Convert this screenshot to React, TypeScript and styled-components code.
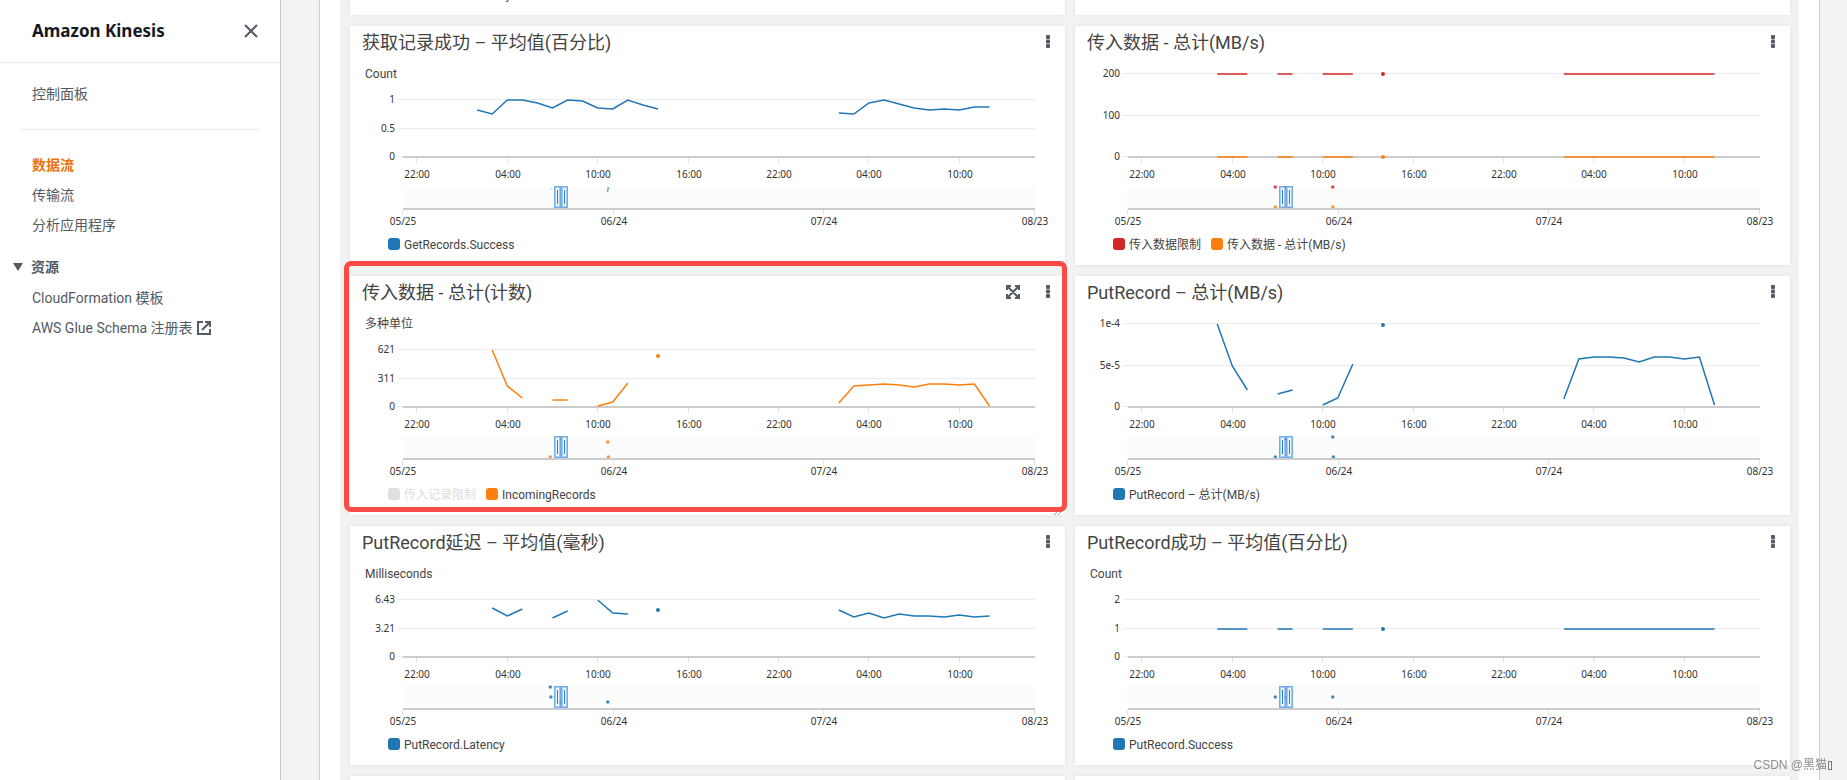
import React, { useLayoutEffect, useRef, useState } from "react";
import styled, { createGlobalStyle } from "styled-components";

const BLUE = "#1f77b4";
const ORANGE = "#ff7f0e";
const RED = "#d62728";
const INK = "#545b64";

const GlobalStyle = createGlobalStyle`
  * { box-sizing: border-box; }
  body {
    margin: 0;
    background: #f2f3f3;
    font-family: Roboto, "Noto Sans CJK SC", sans-serif;
    font-size: 14px;
    color: ${INK};
  }
  button {
    padding: 0;
    border: 0;
    background: none;
    color: inherit;
    font: inherit;
    cursor: pointer;
  }
`;

const Page = styled.div`
  display: flex;
  height: 100vh;
  overflow: hidden;
`;

/* ---------- side navigation ---------- */

const Sidebar = styled.aside`
  flex: 0 0 281px;
  background: #fff;
  border-right: 1px solid #c3c9c9;
`;

const SidebarHeader = styled.header`
  display: flex;
  align-items: center;
  justify-content: space-between;
  height: 63px;
  padding: 0 22px 0 32px;
  border-bottom: 1px solid #eaeded;
`;

const ServiceName = styled.h2`
  margin: 0;
  font-family: "Noto Sans", "Noto Sans CJK SC", sans-serif;
  font-size: 17px;
  line-height: 22px;
  font-weight: 700;
  color: #16191f;
`;

const IconButton = styled.button`
  display: flex;
  align-items: center;
  justify-content: center;
`;

const NavGroup = styled.ul`
  list-style: none;
  margin: 0 20px;
  padding: 16px 0 20px 12px;
  & + & {
    padding: 20px 0 12px 12px;
    border-top: 1px solid #eaeded;
  }
`;

const NavItem = styled.li`
  display: flex;
  align-items: center;
  height: 30px;
`;

const NavLink = styled.a<{ $active?: boolean }>`
  display: flex;
  align-items: center;
  gap: 4px;
  line-height: 20px;
  text-decoration: none;
  color: ${(p) => (p.$active ? "#ec7211" : INK)};
  font-weight: ${(p) => (p.$active ? 700 : 400)};
`;

const SectionToggle = styled.button`
  display: flex;
  align-items: center;
  gap: 8px;
  height: 30px;
  margin-left: 13px;
  font-weight: 700;
  line-height: 20px;
`;

const SectionList = styled.ul`
  list-style: none;
  margin: 0;
  padding: 1px 0 0 32px;
`;

/* ---------- dashboard ---------- */

const Main = styled.main`
  flex: 1;
  min-width: 0;
  padding: 0 27px 0 38px;
`;

const Container = styled.div`
  min-height: 100%;
  padding: 0 20px;
  background: #fff;
  border: solid #c8cfcf;
  border-width: 0 1px;
`;

const Dashboard = styled.div`
  display: grid;
  grid-template-columns: repeat(2, minmax(0, 1fr));
  gap: 11px 10px;
  padding: 0 9px 0 10px;
  background: #f1f3f3;
`;

const Card = styled.section`
  position: relative;
  min-width: 0;
  background: #fff;
  box-shadow: 0 0 4px rgba(0, 0, 0, 0.07);
`;

const CardTail = styled(Card)`
  display: flex;
  align-items: flex-end;
  height: 15px;
`;

const CardHead = styled(Card)`
  height: 239px;
`;

const CardHeader = styled.header`
  display: flex;
  align-items: center;
  gap: 22px;
  height: 34px;
  padding: 0 11px 0 12px;
`;

const CardTitle = styled.h3`
  flex: 1;
  margin: 0;
  font-size: 18px;
  line-height: 24px;
  font-weight: 400;
  color: #444;
`;

const CardAction = styled(IconButton)`
  padding-bottom: 2px;
`;

const ChartArea = styled.div`
  height: 172px;
`;

const ChartSvg = styled.svg`
  display: block;
  width: 100%;
  height: 172px;
  overflow: visible;
`;

const TickText = styled.text`
  font-family: "Noto Sans", "Noto Sans CJK SC", sans-serif;
  font-size: 10px;
  fill: #333;
`;

const UnitText = styled.text`
  font-size: 12px;
  fill: #444;
`;

const Legend = styled.ul`
  display: flex;
  gap: 10px;
  list-style: none;
  margin: 0;
  padding: 0 0 9px 38px;
`;

const LegendItem = styled.li<{ $muted?: boolean }>`
  display: flex;
  align-items: center;
  gap: 4px;
  height: 24px;
  font-size: 12px;
  line-height: 16px;
  color: ${(p) => (p.$muted ? "#ddd" : "#444")};
`;

const LegendLabel = styled.span`
  padding-top: 2px;
`;

const Swatch = styled.span<{ $color: string }>`
  width: 12px;
  height: 12px;
  border-radius: 3px;
  background: ${(p) => p.$color};
`;

const Highlight = styled.div`
  position: absolute;
  inset: -15px -2px 3px -6px;
  border: 5px solid #fa4b46;
  border-radius: 7px;
  pointer-events: none;
`;

const ResizeGrip = styled.svg`
  position: absolute;
  right: 3px;
  bottom: 0;
`;

const Watermark = styled.div`
  position: fixed;
  right: 15px;
  bottom: 6px;
  display: flex;
  align-items: center;
  font: 12px/18px "Liberation Sans", "Noto Sans CJK SC", sans-serif;
  color: #8c8c8c;
`;

const MissingGlyph = styled.span`
  width: 4px;
  height: 9px;
  margin-left: 1px;
  border: 1px solid #777;
`;

/* ---------- icons ---------- */

const CloseIcon = () => (
  <svg width="14" height="14" viewBox="0 0 14 14" aria-hidden="true">
    <path d="M1 1 13 13M13 1 1 13" stroke={INK} strokeWidth="2" fill="none" />
  </svg>
);

const CaretIcon = () => (
  <svg width="10" height="8" viewBox="0 0 10 8" aria-hidden="true">
    <path d="M0 0H10L5 8Z" fill={INK} />
  </svg>
);

const ExternalIcon = () => (
  <svg width="14" height="14" viewBox="0 0 14 14" aria-hidden="true">
    <path d="M6 1H1V13H13V8M8 1H13V6M13 1 5 9" stroke={INK} strokeWidth="2" fill="none" />
  </svg>
);

const MenuIcon = () => (
  <svg width="12" height="14" viewBox="0 0 12 14" aria-hidden="true">
    {[0, 4.5, 9].map((y) => (
      <rect key={y} x="4" y={y} width="4" height="4" rx="1" fill={INK} />
    ))}
  </svg>
);

const ExpandIcon = () => (
  <svg width="14" height="14" viewBox="0 0 14 14" aria-hidden="true">
    <path
      d="M5 1H1V5M9 1H13V5M5 13H1V9M9 13H13V9M1 1 13 13M13 1 1 13"
      stroke={INK}
      strokeWidth="2"
      fill="none"
    />
  </svg>
);

/* ---------- chart ---------- */

type Segment = { start: number; values: number[] };
type Series = { color: string; segments: Segment[] };
/* x is the share of the timeline, y the distance below the top of its band */
type Mark = { x: number; y: number; color: string; faint?: boolean; dash?: boolean };
type ChartProps = {
  unit?: string;
  ticks: [string, string, string];
  series: Series[];
  marks: Mark[];
};

const PLOT_LEFT = 53;
const PLOT_RIGHT = 30;
const BASE = 97;
const BAND_TOP = 126;
const BAND_HEIGHT = 22;
const HOURS = 41.94;
const FIRST_HOUR = 0.92;
const TIMES = ["22:00", "04:00", "10:00", "16:00", "22:00", "04:00", "10:00"];
const DATES = ["05/25", "06/24", "07/24", "08/23"];

function Brush({ x }: { x: number }) {
  return (
    <g>
      <rect x={x} y={BAND_TOP} width="14" height={BAND_HEIGHT} fill="#a5cbf0" />
      {[x, x + 7].map((hx) => (
        <g key={hx}>
          <rect x={hx + 0.5} y={BAND_TOP + 0.5} width="6" height="21" fill="none" stroke="#73ade8" />
          <rect x={hx + 2} y={BAND_TOP + 2} width="3" height="18" fill="#eef6fd" />
          <rect x={hx + 3} y={BAND_TOP + 4} width="1" height="14" fill="#2f7fd0" />
        </g>
      ))}
    </g>
  );
}

function Chart({ unit, ticks, series, marks }: ChartProps) {
  const ref = useRef<HTMLDivElement>(null);
  const [width, setWidth] = useState(715);

  useLayoutEffect(() => {
    const node = ref.current;
    if (!node) return;
    const measure = () => setWidth(node.clientWidth);
    measure();
    const observer = new ResizeObserver(measure);
    observer.observe(node);
    return () => observer.disconnect();
  }, []);

  const right = width - PLOT_RIGHT;
  const plot = right - PLOT_LEFT;
  const top = unit ? 40 : 14;
  const middle = unit ? 68 : 55;
  const xOf = (hour: number) => PLOT_LEFT + ((hour + FIRST_HOUR) / HOURS) * plot;
  const yOf = (value: number) => Math.round(BASE - value * (BASE - top));

  return (
    <ChartArea ref={ref}>
      <ChartSvg>
        {unit && (
          <UnitText x="15" y="18">
            {unit}
          </UnitText>
        )}
        {[top - 1, middle, BASE - 1].map((y, i) => (
          <g key={y}>
            <rect x={PLOT_LEFT - 5} y={y} width={plot + 5} height="1" fill="#ececec" />
            <TickText x={PLOT_LEFT - 8} y={y + 4} textAnchor="end">
              {ticks[i]}
            </TickText>
          </g>
        ))}
        <rect x={PLOT_LEFT} y={BASE - 1} width={plot} height="2" fill="#ccc" />
        {TIMES.map((label, i) => {
          const x = Math.floor(xOf(i * 6));
          return (
            <g key={i}>
              <rect x={x} y={BASE + 1} width="1" height="5" fill="#e4e4e4" />
              <TickText x={x + 1} y="118" textAnchor="middle">
                {label}
              </TickText>
            </g>
          );
        })}
        {series.map((s, si) =>
          s.segments.map((seg, i) =>
            seg.values.length === 1 ? (
              <circle key={`${si}-${i}`} cx={xOf(seg.start)} cy={yOf(seg.values[0])} r="2" fill={s.color} />
            ) : (
              <polyline
                key={`${si}-${i}`}
                points={seg.values.map((v, n) => `${xOf(seg.start + n)},${yOf(v)}`).join(" ")}
                fill="none"
                stroke={s.color}
                strokeWidth="1.5"
              />
            )
          )
        )}

        <rect x={PLOT_LEFT - 1} y={BAND_TOP} width={plot + 1} height={BAND_HEIGHT} fill="#fcfcfc" />
        <Brush x={Math.round(PLOT_LEFT + plot * 0.239)} />
        {marks.map((m, i) =>
          m.dash ? (
            <path
              key={i}
              d={`M${PLOT_LEFT + m.x * plot} ${BAND_TOP + m.y}l-1 5`}
              stroke={m.color}
              strokeWidth="1.5"
              opacity="0.6"
            />
          ) : (
            <circle
              key={i}
              cx={PLOT_LEFT + m.x * plot}
              cy={BAND_TOP + m.y}
              r={m.faint ? 1 : 1.75}
              fill={m.color}
              opacity={m.faint ? 0.5 : 0.85}
            />
          )
        )}
        <rect x={PLOT_LEFT} y={BAND_TOP + BAND_HEIGHT} width={plot} height="2" fill="#ccc" />
        {DATES.map((label, i) => {
          const x = Math.round(PLOT_LEFT - 1 + (plot * i) / 3);
          return (
            <g key={label}>
              <rect x={x} y="150" width="1" height="5" fill="#e4e4e4" />
              <TickText x={x + 1} y="165" textAnchor="middle">
                {label}
              </TickText>
            </g>
          );
        })}
      </ChartSvg>
    </ChartArea>
  );
}

/* ---------- data ---------- */

type LegendEntry = { label: string; color: string; muted?: boolean };
type Widget = ChartProps & { title: string; legend: LegendEntry[]; selected?: boolean };

const flat = (v: number): Segment[] => [
  { start: 5, values: [v, v, v] },
  { start: 9, values: [v, v] },
  { start: 12, values: [v, v, v] },
  { start: 16, values: [v] },
  { start: 28, values: Array(11).fill(v) },
];

const EARLY = 0.233;
const INSIDE = 0.249;
const LATE = 0.324;

const WIDGETS: Widget[] = [
  {
    title: "获取记录成功 – 平均值(百分比)",
    unit: "Count",
    ticks: ["1", "0.5", "0"],
    legend: [{ label: "GetRecords.Success", color: BLUE }],
    series: [
      {
        color: BLUE,
        segments: [
          { start: 4, values: [0.82, 0.755, 1, 1, 0.947, 0.86, 1, 0.982, 0.86, 0.842, 1, 0.918, 0.842] },
          { start: 28, values: [0.772, 0.755, 0.947, 1, 0.93, 0.86, 0.825, 0.842, 0.825, 0.877, 0.877] },
        ],
      },
    ],
    marks: [
      { x: EARLY + 0.002, y: 3, color: "#9cc3de", faint: true },
      { x: LATE + 0.001, y: 1, color: BLUE, dash: true },
    ],
  },
  {
    title: "传入数据 - 总计(MB/s)",
    ticks: ["200", "100", "0"],
    legend: [
      { label: "传入数据限制", color: RED },
      { label: "传入数据 - 总计(MB/s)", color: ORANGE },
    ],
    series: [
      { color: RED, segments: flat(1) },
      { color: ORANGE, segments: flat(0) },
    ],
    marks: [
      { x: EARLY, y: 1, color: RED },
      { x: INSIDE, y: 1, color: RED, faint: true },
      { x: LATE, y: 1, color: RED },
      { x: EARLY, y: 21, color: ORANGE },
      { x: INSIDE, y: 21, color: ORANGE, faint: true },
      { x: LATE, y: 21, color: ORANGE },
    ],
  },
  {
    title: "传入数据 - 总计(计数)",
    selected: true,
    unit: "多种单位",
    ticks: ["621", "311", "0"],
    legend: [
      { label: "传入记录限制", color: "#e0e0e0", muted: true },
      { label: "IncomingRecords", color: ORANGE },
    ],
    series: [
      {
        color: ORANGE,
        segments: [
          { start: 5, values: [1, 0.363, 0.152] },
          { start: 9, values: [0.123, 0.123] },
          { start: 12, values: [0.018, 0.088, 0.42] },
          { start: 16, values: [0.889] },
          { start: 28, values: [0.07, 0.368, 0.386, 0.404, 0.386, 0.351, 0.404, 0.404, 0.386, 0.404, 0.01] },
        ],
      },
    ],
    marks: [
      { x: EARLY, y: 21, color: ORANGE },
      { x: INSIDE, y: 3, color: "#777", faint: true },
      { x: LATE, y: 6, color: ORANGE },
      { x: LATE + 0.001, y: 21, color: ORANGE },
    ],
  },
  {
    title: "PutRecord – 总计(MB/s)",
    ticks: ["1e-4", "5e-5", "0"],
    legend: [{ label: "PutRecord – 总计(MB/s)", color: BLUE }],
    series: [
      {
        color: BLUE,
        segments: [
          { start: 5, values: [1, 0.49, 0.205] },
          { start: 9, values: [0.157, 0.205] },
          { start: 12, values: [0.024, 0.108, 0.518] },
          { start: 16, values: [0.984] },
          { start: 28, values: [0.096, 0.578, 0.602, 0.602, 0.59, 0.542, 0.602, 0.602, 0.578, 0.602, 0.024] },
        ],
      },
    ],
    marks: [
      { x: EARLY, y: 21, color: BLUE },
      { x: INSIDE, y: 3, color: BLUE, faint: true },
      { x: LATE, y: 1, color: BLUE },
      { x: LATE + 0.001, y: 21, color: BLUE },
    ],
  },
  {
    title: "PutRecord延迟 – 平均值(毫秒)",
    unit: "Milliseconds",
    ticks: ["6.43", "3.21", "0"],
    legend: [{ label: "PutRecord.Latency", color: BLUE }],
    series: [
      {
        color: BLUE,
        segments: [
          { start: 5, values: [0.865, 0.719, 0.848] },
          { start: 9, values: [0.684, 0.807] },
          { start: 12, values: [1, 0.772, 0.754] },
          { start: 16, values: [0.819] },
          { start: 28, values: [0.825, 0.7, 0.77, 0.684, 0.754, 0.719, 0.719, 0.7, 0.737, 0.7, 0.719] },
        ],
      },
    ],
    marks: [
      { x: EARLY, y: 1, color: BLUE },
      { x: EARLY + 0.001, y: 11, color: BLUE },
      { x: INSIDE, y: 16, color: BLUE, faint: true },
      { x: LATE, y: 16, color: BLUE },
    ],
  },
  {
    title: "PutRecord成功 – 平均值(百分比)",
    unit: "Count",
    ticks: ["2", "1", "0"],
    legend: [{ label: "PutRecord.Success", color: BLUE }],
    series: [{ color: BLUE, segments: flat(0.5) }],
    marks: [
      { x: EARLY, y: 11, color: BLUE },
      { x: INSIDE, y: 11, color: BLUE, faint: true },
      { x: LATE, y: 11, color: BLUE },
    ],
  },
];

function ChartLegend({ entries }: { entries: LegendEntry[] }) {
  return (
    <Legend>
      {entries.map((e) => (
        <LegendItem key={e.label} $muted={e.muted}>
          <Swatch $color={e.color} />
          <LegendLabel>{e.label}</LegendLabel>
        </LegendItem>
      ))}
    </Legend>
  );
}

function WidgetCard({ title, legend, selected, ...chart }: Widget) {
  return (
    <Card>
      <CardHeader>
        <CardTitle>{title}</CardTitle>
        {selected && (
          <CardAction type="button" aria-label="放大">
            <ExpandIcon />
          </CardAction>
        )}
        <CardAction type="button" aria-label="小部件操作">
          <MenuIcon />
        </CardAction>
      </CardHeader>
      <Chart {...chart} />
      <ChartLegend entries={legend} />
      {selected && (
        <>
          <ResizeGrip width="8" height="4" viewBox="0 0 8 4" aria-hidden="true">
            <path d="M0 4 4 0M4 4 8 0" stroke="#999" fill="none" />
          </ResizeGrip>
          <Highlight />
        </>
      )}
    </Card>
  );
}

export default function App() {
  return (
    <>
      <GlobalStyle />
      <Page>
        <Sidebar>
          <SidebarHeader>
            <ServiceName>Amazon Kinesis</ServiceName>
            <IconButton type="button" aria-label="关闭">
              <CloseIcon />
            </IconButton>
          </SidebarHeader>
          <nav>
            <NavGroup>
              <NavItem>
                <NavLink href="#dashboard">控制面板</NavLink>
              </NavItem>
            </NavGroup>
            <NavGroup>
              <NavItem>
                <NavLink href="#streams" $active>
                  数据流
                </NavLink>
              </NavItem>
              <NavItem>
                <NavLink href="#delivery">传输流</NavLink>
              </NavItem>
              <NavItem>
                <NavLink href="#analytics">分析应用程序</NavLink>
              </NavItem>
            </NavGroup>
            <SectionToggle type="button" aria-expanded="true">
              <CaretIcon />
              资源
            </SectionToggle>
            <SectionList>
              <NavItem>
                <NavLink href="#cloudformation">CloudFormation 模板</NavLink>
              </NavItem>
              <NavItem>
                <NavLink href="#glue">
                  AWS Glue Schema 注册表
                  <ExternalIcon />
                </NavLink>
              </NavItem>
            </SectionList>
          </nav>
        </Sidebar>
        <Main>
          <Container>
            <Dashboard>
              <CardTail>
                <ChartLegend entries={[{ label: "GetRecords.Latency", color: BLUE }]} />
              </CardTail>
              <CardTail />
              {WIDGETS.map((w) => (
                <WidgetCard key={w.title} {...w} />
              ))}
              <CardHead />
              <CardHead />
            </Dashboard>
          </Container>
        </Main>
      </Page>
      <Watermark>
        CSDN @黑猫
        <MissingGlyph />
      </Watermark>
    </>
  );
}
